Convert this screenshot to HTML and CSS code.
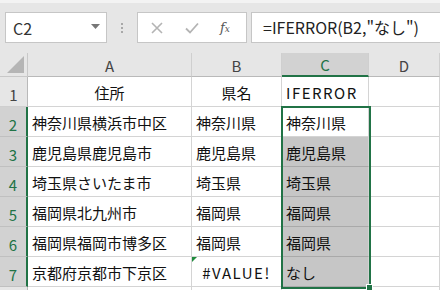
FILE: index.html
```html
<!DOCTYPE html>
<html lang="ja">
<head>
	<meta charset="UTF-8">
	<title>IFERROR</title>
	<link rel="stylesheet" href="styles.css">
</head>
<body>
	<section class="toolbar">
		<div class="namebox">
			<span>C2</span>
			<svg class="drop" width="9" height="5" viewBox="0 0 9 5"><path d="M0 0H9L4.5 5Z" fill="#777"/></svg>
		</div>
		<div class="grip"><i></i><i></i><i></i></div>
		<div class="buttons">
			<svg width="14" height="14" viewBox="0 0 14 14"><path d="M2 2L12 12M12 2L2 12" stroke="#b4b4b4" stroke-width="1.6"/></svg>
			<svg width="16" height="14" viewBox="0 0 16 14"><path d="M2 7.5L6 11.5L14 2.5" stroke="#b4b4b4" stroke-width="1.8" fill="none"/></svg>
			<span class="fx">f<sub>x</sub></span>
		</div>
		<div class="formula">=IFERROR(B2,"なし")</div>
	</section>

	<section class="sheet">
		<div class="corner"><b></b></div>
		<div class="colhead">A</div>
		<div class="colhead">B</div>
		<div class="colhead sel">C</div>
		<div class="colhead">D</div>

		<div class="rowhead">1</div>
		<div class="cell center">住所</div>
		<div class="cell center">県名</div>
		<div class="cell latin">IFERROR</div>
		<div class="cell"></div>

		<div class="rowhead sel">2</div>
		<div class="cell">神奈川県横浜市中区</div>
		<div class="cell">神奈川県</div>
		<div class="cell">神奈川県</div>
		<div class="cell"></div>

		<div class="rowhead sel">3</div>
		<div class="cell">鹿児島県鹿児島市</div>
		<div class="cell">鹿児島県</div>
		<div class="cell hl">鹿児島県</div>
		<div class="cell"></div>

		<div class="rowhead sel">4</div>
		<div class="cell">埼玉県さいたま市</div>
		<div class="cell">埼玉県</div>
		<div class="cell hl">埼玉県</div>
		<div class="cell"></div>

		<div class="rowhead sel">5</div>
		<div class="cell">福岡県北九州市</div>
		<div class="cell">福岡県</div>
		<div class="cell hl">福岡県</div>
		<div class="cell"></div>

		<div class="rowhead sel">6</div>
		<div class="cell">福岡県福岡市博多区</div>
		<div class="cell">福岡県</div>
		<div class="cell hl">福岡県</div>
		<div class="cell"></div>

		<div class="rowhead sel">7</div>
		<div class="cell">京都府京都市下京区</div>
		<div class="cell center latin err">#VALUE!</div>
		<div class="cell hl">なし</div>
		<div class="cell"></div>

		<div class="rowhead"></div>
		<div class="cell"></div>
		<div class="cell"></div>
		<div class="cell"></div>
		<div class="cell"></div>

		<div class="selection"><b></b></div>
	</section>
</body>
</html>
```

FILE: styles.css
```css
body {
	margin: 0;
	padding: 0;
	width: 440px;
	height: 290px;
	overflow: hidden;
	background: #fff;
	font-family: "Noto Sans CJK JP", "Noto Sans", sans-serif;
}

/* formula bar */
.toolbar {
	height: 53px;
	box-sizing: border-box;
	background: #e6e6e6;
	border-top: 3px solid #f3f3f3;
	display: flex;
	align-items: flex-start;
	padding: 9px 0 0 5px;
}
.namebox {
	width: 102px;
	height: 31px;
	box-sizing: border-box;
	background: #fff;
	border: 1px solid #c6c6c6;
	display: flex;
	align-items: center;
	justify-content: space-between;
	padding: 0 6px 0 7px;
	font-size: 16px;
	color: #333;
}
.drop {
	margin-top: -2px;
}
.grip {
	width: 30px;
	height: 31px;
	display: flex;
	flex-direction: column;
	align-items: center;
	justify-content: center;
	gap: 2px;
}
.grip i {
	width: 2px;
	height: 2px;
	background: #a8a8a8;
}
.buttons {
	width: 110px;
	height: 31px;
	box-sizing: border-box;
	background: #fff;
	border: 1px solid #c6c6c6;
	display: flex;
	align-items: center;
	padding-left: 12px;
	gap: 20px;
}
.fx {
	font-family: "DejaVu Serif", serif;
	font-style: italic;
	font-size: 13px;
	color: #555;
}
.fx sub {
	font-size: 9px;
	vertical-align: 0;
}
.formula {
	flex: 1;
	height: 31px;
	box-sizing: border-box;
	margin-left: 4px;
	background: #fff;
	border: 1px solid #c6c6c6;
	border-right: 0;
	padding-left: 11px;
	line-height: 28px;
	font-size: 16px;
	color: #222;
}

/* grid */
.sheet {
	position: relative;
	display: grid;
	grid-template-columns: 28px 164px 90px 87px 1fr;
	grid-template-rows: 24px repeat(7, 30px) 3px;
}
.sheet > div {
	box-sizing: border-box;
}
.corner,
.colhead,
.rowhead {
	background: #e6e6e6;
	color: #444;
	font-size: 15px;
	display: flex;
	align-items: center;
	justify-content: center;
}
.corner {
	border-right: 1px solid #c8c8c8;
	border-bottom: 1px solid #c8c8c8;
	position: relative;
}
.corner b {
	position: absolute;
	right: 3px;
	bottom: 3px;
	width: 0;
	height: 0;
	border-left: 17px solid transparent;
	border-bottom: 17px solid #b5b5b5;
}
.colhead {
	border-right: 1px solid #cfcfcf;
	border-bottom: 1px solid #b9b9b9;
	padding-top: 1px;
}
.colhead.sel {
	background: #d2d2d2;
	color: #217346;
	border-bottom: 2px solid #217346;
}
.rowhead {
	border-right: 1px solid #b9b9b9;
	border-bottom: 1px solid #cfcfcf;
	padding-top: 5px;
}
.rowhead.sel {
	background: #d2d2d2;
	color: #217346;
	border-right: 2px solid #217346;
	border-bottom-color: #c0c0c0;
}
.cell {
	border-right: 1px solid #d4d4d4;
	border-bottom: 1px solid #d4d4d4;
	font-size: 15px;
	color: #111;
	display: flex;
	align-items: flex-end;
	padding: 0 0 3px 4px;
	white-space: nowrap;
	position: relative;
}
.cell.center {
	justify-content: center;
	padding-left: 0;
}
.cell.latin {
	letter-spacing: 1.5px;
}
.cell.hl {
	background: #c6c6c6;
	border-bottom-color: #a9a9a9;
}
.err::before {
	content: "";
	position: absolute;
	left: 0;
	top: 0;
	border-top: 5px solid #1f8a3c;
	border-right: 5px solid transparent;
}
.selection {
	position: absolute;
	grid-column: 4 / 5;
	grid-row: 3 / 9;
	top: -1px;
	left: -1px;
	right: -2px;
	bottom: -2px;
	border: 2px solid #217346;
	pointer-events: none;
}
.selection b {
	position: absolute;
	right: -4px;
	bottom: -4px;
	width: 5px;
	height: 5px;
	background: #217346;
	border: 1px solid #fff;
}
```
